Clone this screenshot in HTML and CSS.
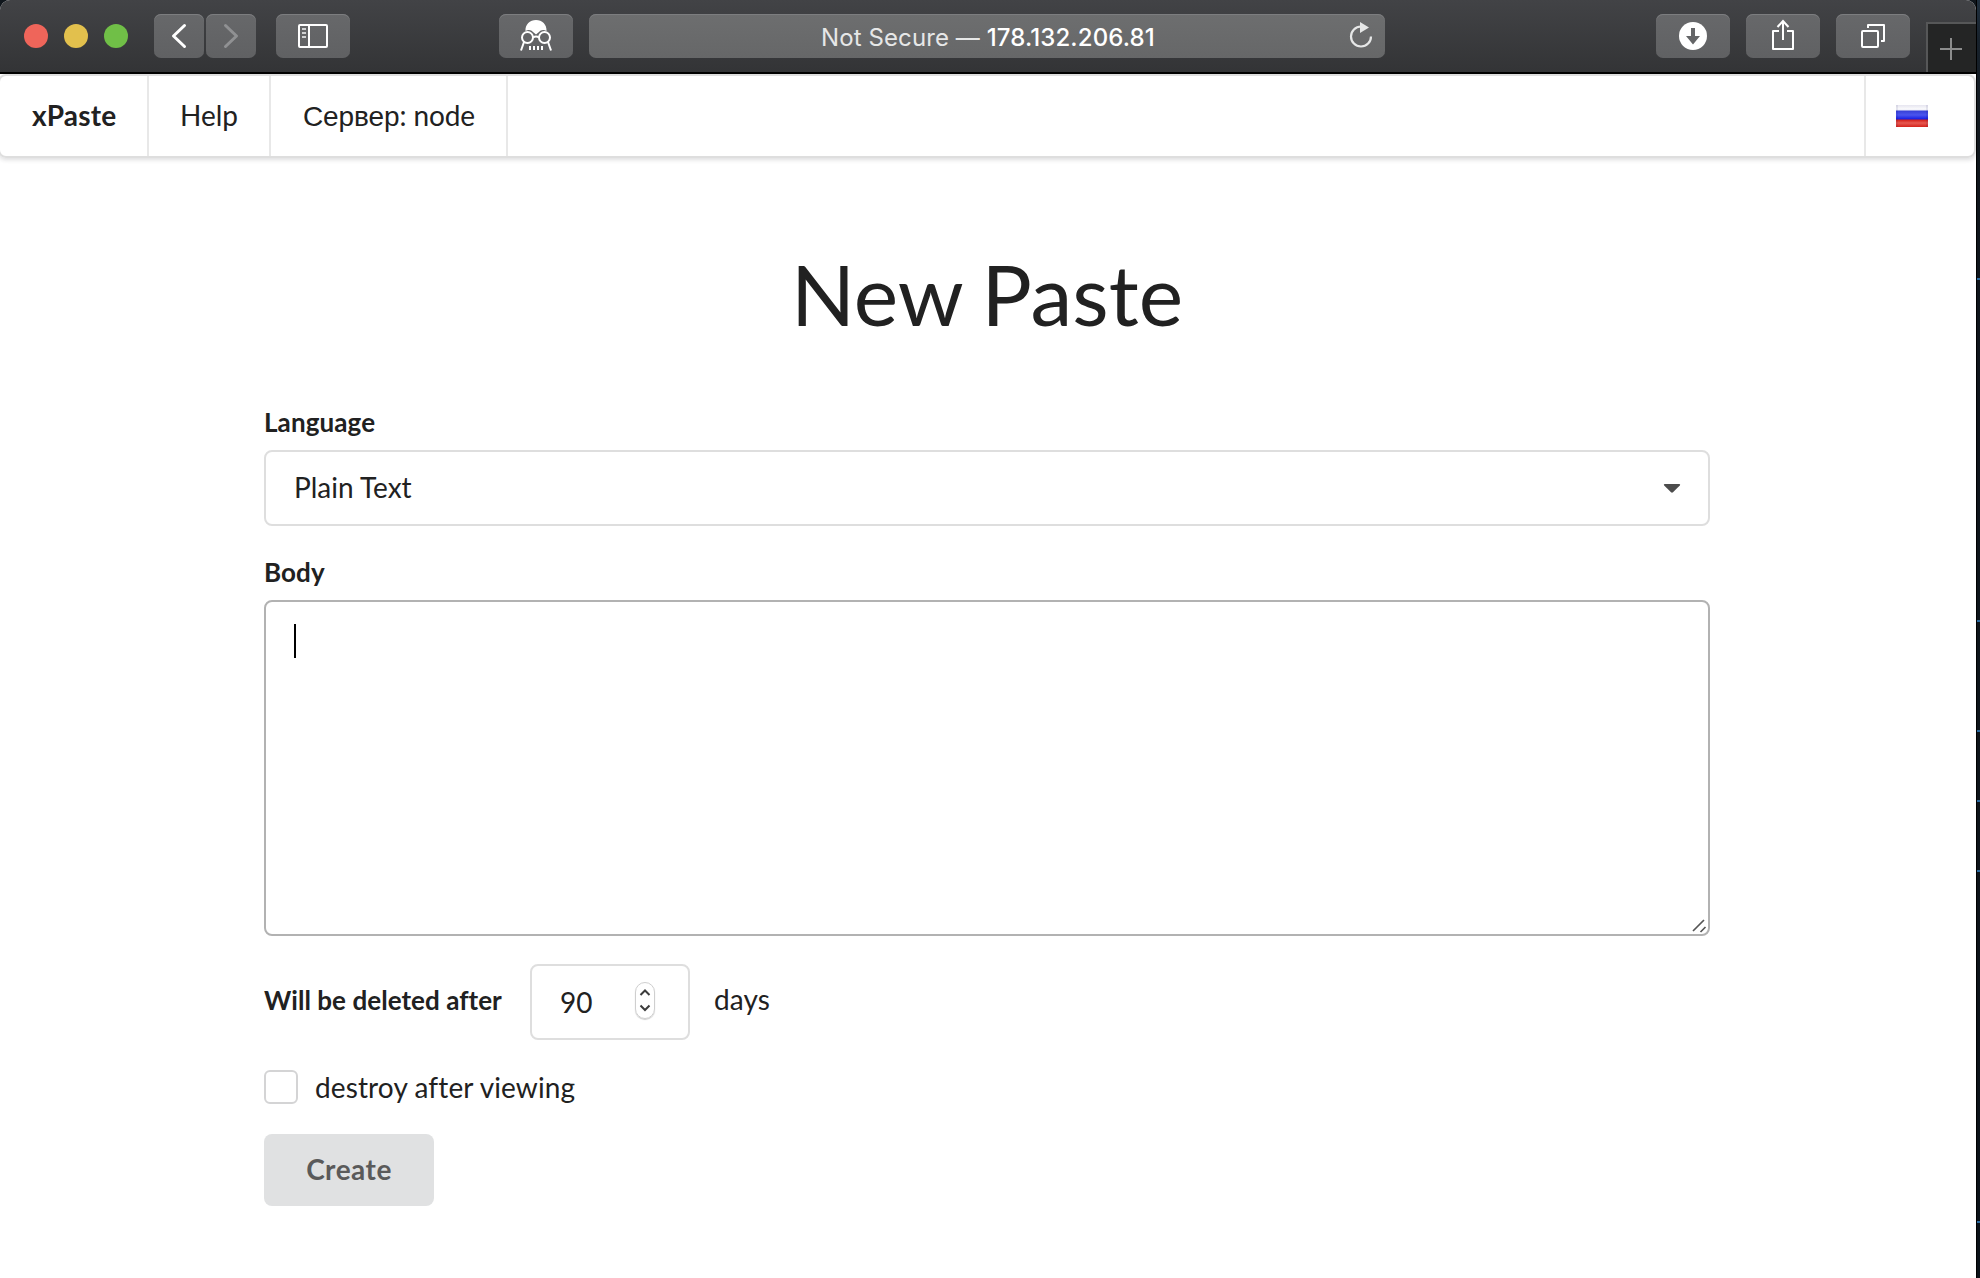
FILE: index.html
```html
<!DOCTYPE html>
<html lang="en">
<head>
<meta charset="utf-8">
<title>xPaste</title>
<link rel="stylesheet" href="styles.css">
</head>
<body>
<div class="window">
  <header class="toolbar">
    <div class="lights"><i class="light red"></i><i class="light yellow"></i><i class="light green"></i></div>
    <div class="nav-buttons">
      <div class="tool narrow"><svg width="50" height="44" viewBox="0 0 50 44"><path d="M30.500 11.500L19.500 22l11 10.500" fill="none" stroke="#fff" stroke-width="3" stroke-linecap="round" stroke-linejoin="round"/></svg></div>
      <div class="tool narrow"><svg width="50" height="44" viewBox="0 0 50 44"><path d="M19.500 11.500L30.500 22l-11 10.500" fill="none" stroke="#909193" stroke-width="3" stroke-linecap="round" stroke-linejoin="round"/></svg></div>
    </div>
    <div class="tool sidebar"><svg width="74" height="44" viewBox="0 0 74 44"><g fill="none" stroke="#fff" stroke-width="2"><rect x="23" y="11" width="28" height="22" rx="1"/><path d="M33 11v22"/><path d="M26 15h4M26 19h4M26 23h4" stroke="#d0d1d2"/></g></svg></div>
    <div class="tool reader"><svg width="74" height="44" viewBox="0 0 74 44"><path d="M26.500 17C26 10.500 31 6 37 6s11 4.500 10.500 11c-3-2-6-1-7.500 1l-3 2.500-3-2.500c-1.500-2-4.500-3-7.500-1z" fill="#fff"/><g fill="none" stroke="#fff" stroke-width="2"><circle cx="28.500" cy="23.500" r="5.500" fill="#646567"/><circle cx="45.500" cy="23.500" r="5.500" fill="#646567"/><path d="M34 23.500q3-2 6 0M25 28l-3 8.500M49 28l3 8.500M31 32v4M35 32v4M39 32v4M43 32v4"/></g></svg></div>
    <div class="address">
      <span class="url">Not Secure — <b>178.132.206.81</b></span>
      <svg class="reload" width="30" height="44" viewBox="0 0 30 44"><path d="M26 22.500a10 10 0 1 1-10-10" fill="none" stroke="#e6e7e7" stroke-width="2.200"/><path d="M15 8l9 5.500-9 5.500z" fill="#e6e7e7"/></svg>
    </div>
    <div class="actions">
      <div class="tool"><svg width="74" height="44" viewBox="0 0 74 44"><circle cx="37" cy="22" r="14" fill="#fff"/><path d="M35 14h4v8h5l-7 8.500-7-8.500h5z" fill="#646567"/></svg></div>
      <div class="tool"><svg width="74" height="44" viewBox="0 0 74 44"><g fill="none" stroke="#fff" stroke-width="2"><path d="M33 17h-6v18h20V17h-6M37 26V8" stroke-linejoin="round"/><path d="M31.500 13L37 7l5.500 6"/></g></svg></div>
      <div class="tool"><svg width="74" height="44" viewBox="0 0 74 44"><g fill="none" stroke="#fff" stroke-width="2"><rect x="26" y="17" width="16" height="16" rx="1"/><path d="M32 14v-3h16v16h-3" stroke-linejoin="round"/></g></svg></div>
    </div>
    <div class="new-tab"><svg width="48" height="48" viewBox="0 0 48 48"><path d="M12 25h22M23 14v22" stroke="#8c8d8d" stroke-width="2"/></svg></div>
  </header>

  <nav class="menu">
    <div class="item brand">xPaste</div>
    <div class="item help">Help</div>
    <div class="item server"><span class="cyr">Сервер</span>: node</div>
    <div class="item locale"><span class="flag"></span></div>
  </nav>

  <main class="container">
    <h1 class="title">New Paste</h1>
    <div class="label">Language</div>
    <div class="select"><span>Plain Text</span><svg width="18" height="10" viewBox="0 0 18 10"><path d="M1.500 0h15q1.300 .6 .3 1.600L10 8.300q-1 .9-2 0L1.200 1.600Q.2.600 1.500 0z" fill="#4c4c4c"/></svg></div>
    <div class="label body-label">Body</div>
    <div class="editor"><span class="caret"></span><svg class="grip" width="16" height="16" viewBox="0 0 16 16"><path d="M2 14L13 3M9.500 15l5-5" stroke="#555" stroke-width="1.700" fill="none"/></svg></div>
    <div class="expiry">
      <div class="expiry-label">Will be deleted after</div>
      <div class="number"><span>90</span><div class="stepper"><svg width="18" height="35" viewBox="0 0 18 35"><path d="M4.500 12l4.500-4.500 4.500 4.500M4.500 22.500L9 27l4.500-4.500" fill="none" stroke="#3c3c3c" stroke-width="2"/></svg></div></div>
      <div class="days">days</div>
    </div>
    <div class="check"><span class="box"></span><span class="check-label">destroy after viewing</span></div>
    <div class="create">Create</div>
  </main>
</div>
<aside class="desktop"></aside>
</body>
</html>
```
FILE: styles.css
```css
* { box-sizing: border-box; }
body {
  margin: 0;
  display: flex;
  width: 1980px;
  height: 1278px;
  overflow: hidden;
  background: #10161c;
  font: 28px/40px Lato, "Liberation Sans", sans-serif;
  color: #212121;
}
svg { display: block; }
.window {
  width: 1976px;
  height: 1278px;
  background: #fff;
  border-radius: 10px 10px 0 0;
  overflow: hidden;
}
.desktop {
  width: 4px;
  border-left: 1px solid #000;
  background:
    linear-gradient(#2b6ca3, #2b6ca3) 0 278px / 3px 2px no-repeat,
    linear-gradient(#2b6ca3, #2b6ca3) 0 620px / 3px 2px no-repeat,
    linear-gradient(#2b6ca3, #2b6ca3) 0 730px / 3px 2px no-repeat,
    linear-gradient(#2b6ca3, #2b6ca3) 0 800px / 3px 2px no-repeat,
    linear-gradient(#2b6ca3, #2b6ca3) 0 870px / 3px 2px no-repeat,
    linear-gradient(#2b6ca3, #2b6ca3) 0 1221px / 3px 2px no-repeat,
    linear-gradient(#20303f 0, #18222c 40px, #10161c 150px, #0b1219 100%);
}

.toolbar {
  display: flex;
  align-items: flex-start;
  height: 74px;
  padding: 14px 0 0 24px;
  background: linear-gradient(#424346, #333436);
  border-bottom: 2px solid #000;
}
.lights { display: flex; gap: 16px; width: 130px; padding-top: 10px; }
.light { width: 24px; height: 24px; border-radius: 50%; }
.red { background: #ef655a; }
.yellow { background: #e2c04d; }
.green { background: #70bf47; }
.nav-buttons { display: flex; gap: 2px; }
.tool, .address {
  width: 74px;
  height: 44px;
  border-radius: 7px;
  background: linear-gradient(#67686a, #606163);
  box-shadow: inset 0 1px #7c7d7f;
}
.tool.narrow { width: 50px; }
.sidebar { margin-left: 20px; }
.reader { margin-left: 149px; }
.address {
  display: flex;
  align-items: center;
  justify-content: flex-end;
  width: 796px;
  margin-left: 16px;
  padding-right: 10px;
  background: linear-gradient(#6d6e6f, #666768);
}
.url {
  width: 334px;
  margin-right: 190px;
  padding-top: 4px;
  font-family: Inter, sans-serif;
  font-size: 24px;
  letter-spacing: 0.1px;
  color: #e6e7e7;
  white-space: nowrap;
}
.url b { font-weight: 500; color: #fff; }
.actions { display: flex; gap: 16px; margin-left: 271px; }
.new-tab {
  width: 50px;
  height: 50px;
  margin: 8px 0 0 16px;
  background: #242525;
  border: 2px solid #565758;
  border-width: 2px 0 0 2px;
}

.menu {
  display: flex;
  width: 1978px;
  height: 84px;
  margin-left: -2px;
  border: 2px solid #dedede;
  border-radius: 8px;
  box-shadow: 0 2px 4px rgba(34, 36, 38, .15);
}
.item { padding: 19px 0 0 32px; border-right: 2px solid #e8e8e8; }
.brand { width: 149px; font-weight: 700; letter-spacing: .2px; }
.help { width: 122px; padding-left: 31px; }
.server { width: 237px; letter-spacing: -.1px; }
.cyr { font-family: "Liberation Sans", sans-serif; }
.locale {
  width: 110px;
  margin-left: auto;
  padding: 29px 0 0 30px;
  border-right: 0;
  border-left: 2px solid #e8e8e8;
}
.flag {
  display: block;
  width: 32px;
  height: 22px;
  background: linear-gradient(#e6e5f0 0, #fafafc 4px, #ececf8 5px, #3841d8 6px, #4b55ee 10px, #1720e4 14px, #d5231b 15px, #e65850 18px, #d5231b 22px);
  box-shadow: inset 2px 0 rgba(0, 0, 80, .08), inset -2px 0 rgba(0, 0, 80, .08);
}

.container { width: 1446px; margin-left: 264px; }
.title {
  margin: 0;
  padding-top: 85px;
  font-size: 84px;
  line-height: 102px;
  font-weight: 400;
  text-align: center;
  word-spacing: -2px;
}
.label { margin-top: 57px; height: 48px; font-size: 26px; font-weight: 700; letter-spacing: .1px; }
.select {
  display: flex;
  justify-content: space-between;
  align-items: center;
  height: 76px;
  padding: 0 27px 0 28px;
  border: 2px solid #dedede;
  border-radius: 8px;
}
.select span { padding-bottom: 2px; }
.select svg { margin-top: 2px; }
.body-label { margin-top: 26px; }
.editor {
  display: flex;
  justify-content: space-between;
  height: 336px;
  padding: 22px 1px 0 28px;
  border: 2px solid #b2b2b2;
  border-radius: 8px;
}
.caret { width: 2px; height: 34px; background: #000; }
.grip { align-self: flex-end; margin-bottom: 1px; }
.expiry { display: flex; margin-top: 28px; }
.expiry-label {
  width: 266px;
  flex-shrink: 0;
  padding-top: 16px;
  font-size: 26px;
  font-weight: 700;
  letter-spacing: .05px;
}
.number {
  display: flex;
  width: 160px;
  height: 76px;
  padding-left: 28px;
  border: 2px solid #dedede;
  border-radius: 8px;
}
.number span { width: 75px; padding-top: 16px; }
.stepper {
  width: 20px;
  height: 37px;
  margin-top: 16px;
  border: 1px solid #cfcfcf;
  border-radius: 10px;
  box-shadow: 0 1px 1px rgba(0, 0, 0, .2);
}
.days { padding: 15px 0 0 24px; letter-spacing: .1px; }
.check { display: flex; margin-top: 30px; height: 64px; }
.box { width: 34px; height: 34px; border: 2px solid #d4d4d5; border-radius: 6px; }
.check-label { margin: -3px 0 0 17px; letter-spacing: .12px; }
.create {
  width: 170px;
  height: 72px;
  padding-top: 15px;
  border-radius: 8px;
  background: #e0e1e2;
  color: #5a5a5a;
  font-weight: 700;
  letter-spacing: .5px;
  text-align: center;
}
```
